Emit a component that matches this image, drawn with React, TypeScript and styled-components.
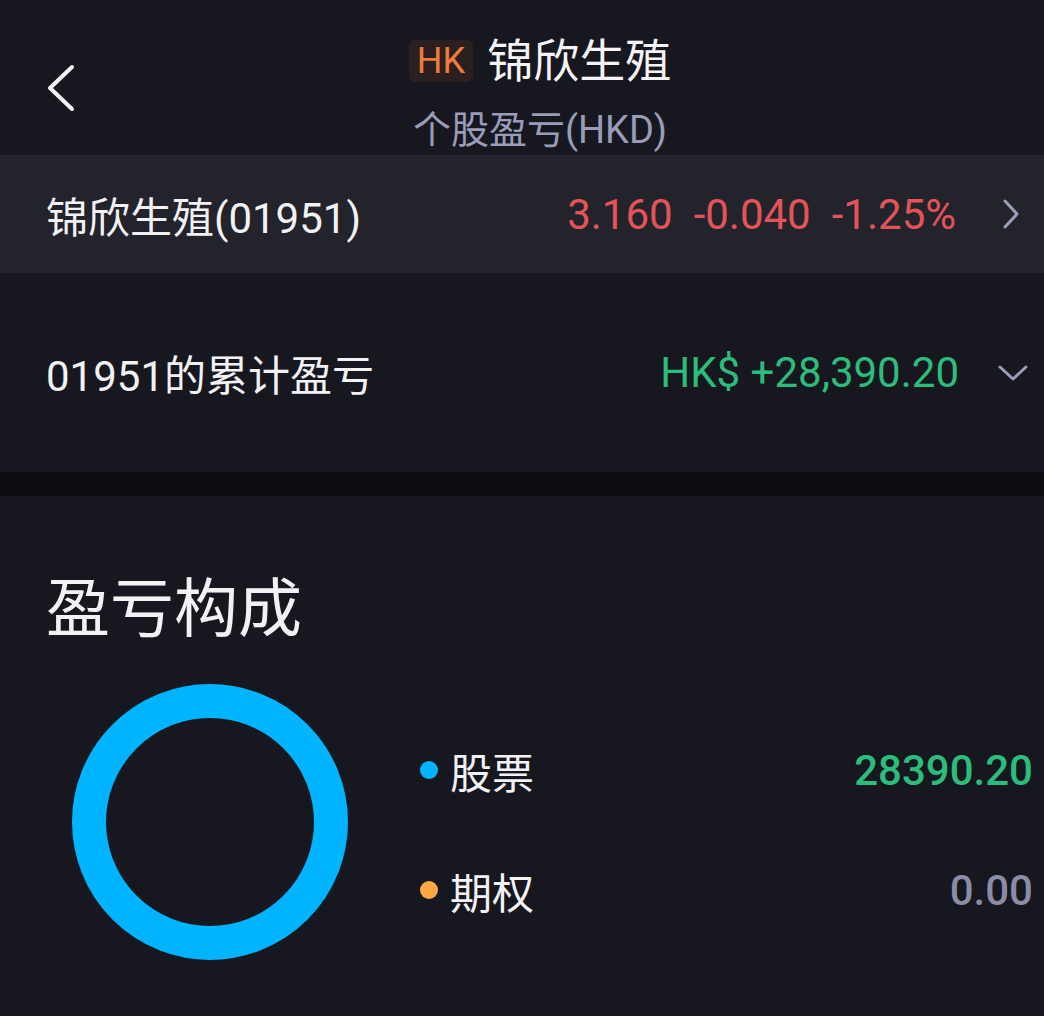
import styled, { createGlobalStyle } from "styled-components";

const GlobalStyle = createGlobalStyle`
  html, body {
    margin: 0;
    padding: 0;
    background: #17181f;
  }
  body {
    font-family: Roboto, "Noto Sans CJK SC", sans-serif;
    color: #f2f2f5;
  }
`;

const Page = styled.div`
  width: 1044px;
  min-height: 1016px;
  background: #17181f;
`;

const Header = styled.header`
  display: grid;
  grid-template-columns: 100px 1fr 64px;
  align-items: start;
  height: 155px;
  box-sizing: border-box;
`;

const BackButton = styled.button`
  background: none;
  border: none;
  padding: 20px 0 0 44px;
  display: flex;
  align-items: center;
  align-self: stretch;
  color: #f2f2f5;
  cursor: pointer;
`;

const TitleBlock = styled.div`
  display: flex;
  flex-direction: column;
  align-items: center;
  padding-top: 36px;
`;

const TitleRow = styled.div`
  display: flex;
  align-items: center;
  gap: 14px;
`;

const MarketBadge = styled.span`
  display: inline-flex;
  align-items: center;
  justify-content: center;
  height: 42px;
  padding: 0 8px;
  border-radius: 6px;
  background: #2b201f;
  color: #f07a3c;
  font-size: 36px;
  line-height: 1;
`;

const Title = styled.h1`
  margin: 0;
  font-size: 46px;
  font-weight: 400;
  line-height: 50px;
  color: #f4f4f6;
`;

const Subtitle = styled.div`
  margin-top: 24px;
  font-size: 38px;
  line-height: 40px;
  color: #9a9cba;
`;

const Row = styled.div<{ $height: number; $bg?: string; $padRight: number }>`
  display: flex;
  align-items: center;
  justify-content: space-between;
  height: ${(p) => p.$height}px;
  padding: 0 ${(p) => p.$padRight}px 0 46px;
  background: ${(p) => p.$bg ?? "transparent"};
  font-size: 42px;
`;

const RowLabel = styled.span`
  color: #f2f2f5;
`;

const RowRight = styled.div<{ $gap: number }>`
  display: flex;
  align-items: center;
  gap: ${(p) => p.$gap}px;
`;

const Quote = styled.div`
  display: flex;
  gap: 21px;
  color: #e5535a;
`;

const GreenValue = styled.span`
  color: #2cbd7c;
`;

const Divider = styled.div`
  height: 24px;
  background: #0c0d11;
`;

const Section = styled.section`
  padding: 78px 11px 0 46px;
`;

const SectionTitle = styled.h2`
  margin: 0;
  font-size: 64px;
  font-weight: 400;
  line-height: 72px;
  color: #f2f2f5;
`;

const ChartArea = styled.div`
  display: flex;
  align-items: center;
  margin-top: 38px;
`;

const DonutWrap = styled.div`
  margin-left: 26px;
  width: 276px;
  height: 276px;
  flex-shrink: 0;
`;

const Legend = styled.div`
  flex: 1;
  display: flex;
  flex-direction: column;
  gap: 60px;
  margin-left: 72px;
  margin-top: 16px;
`;

const LegendRow = styled.div`
  display: flex;
  align-items: center;
  height: 60px;
`;

const Dot = styled.span<{ $color: string }>`
  width: 18px;
  height: 18px;
  border-radius: 50%;
  background: ${(p) => p.$color};
  margin-right: 12px;
`;

const LegendLabel = styled.span`
  font-size: 42px;
  color: #f2f2f5;
  flex: 1;
`;

const LegendValue = styled.span<{ $color: string }>`
  font-size: 42px;
  font-weight: 500;
  color: ${(p) => p.$color};
`;

const legend = [
  { label: "股票", value: "28390.20", dot: "#00b4ff", color: "#2cbd7c" },
  { label: "期权", value: "0.00", dot: "#ffa744", color: "#8a8ca8" },
];

export default function App() {
  return (
    <Page>
      <GlobalStyle />
      <Header>
        <BackButton aria-label="back">
          <svg width="32" height="48" viewBox="0 0 32 48" fill="none">
            <path d="M28 3 L6 24 L28 45" stroke="#f2f2f5" strokeWidth="4" strokeLinecap="round" strokeLinejoin="round" />
          </svg>
        </BackButton>
        <TitleBlock>
          <TitleRow>
            <MarketBadge>HK</MarketBadge>
            <Title>锦欣生殖</Title>
          </TitleRow>
          <Subtitle>个股盈亏(HKD)</Subtitle>
        </TitleBlock>
        <div />
      </Header>

      <Row $height={118} $bg="#22232b" $padRight={24}>
        <RowLabel>锦欣生殖(01951)</RowLabel>
        <RowRight $gap={46}>
          <Quote>
            <span>3.160</span>
            <span>-0.040</span>
            <span>-1.25%</span>
          </Quote>
          <svg width="18" height="32" viewBox="0 0 18 32" fill="none">
            <path d="M3 3 L15 16 L3 29" stroke="#9a9cba" strokeWidth="3" strokeLinecap="round" strokeLinejoin="round" />
          </svg>
        </RowRight>
      </Row>

      <Row $height={199} $padRight={15}>
        <RowLabel>01951的累计盈亏</RowLabel>
        <RowRight $gap={38}>
          <GreenValue>HK$ +28,390.20</GreenValue>
          <svg width="32" height="18" viewBox="0 0 32 18" fill="none">
            <path d="M3 3 L16 15 L29 3" stroke="#9a9cba" strokeWidth="3" strokeLinecap="round" strokeLinejoin="round" />
          </svg>
        </RowRight>
      </Row>

      <Divider />

      <Section>
        <SectionTitle>盈亏构成</SectionTitle>
        <ChartArea>
          <DonutWrap>
            <svg width="276" height="276" viewBox="0 0 276 276">
              <circle cx="138" cy="138" r="121" fill="none" stroke="#00b4ff" strokeWidth="34" />
            </svg>
          </DonutWrap>
          <Legend>
            {legend.map((item) => (
              <LegendRow key={item.label}>
                <Dot $color={item.dot} />
                <LegendLabel>{item.label}</LegendLabel>
                <LegendValue $color={item.color}>{item.value}</LegendValue>
              </LegendRow>
            ))}
          </Legend>
        </ChartArea>
      </Section>
    </Page>
  );
}
